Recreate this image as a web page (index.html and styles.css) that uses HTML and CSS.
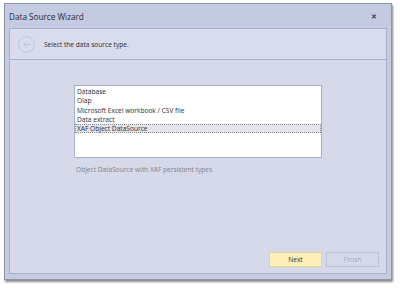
FILE: index.html
```html
<!DOCTYPE html>
<html>
<head>
<meta charset="utf-8">
<link rel="stylesheet" href="styles.css">
</head>
<body>
<div class="window">
  <div class="titlebar">
    <span class="title">Data Source Wizard</span>
    <span class="close">&#x2715;</span>
  </div>
  <div class="panel">
    <div class="header">
      <svg class="back" width="17" height="17" viewBox="0 0 17 17">
        <circle cx="8.5" cy="8.5" r="7.8" fill="none" stroke="#c0c5d8" stroke-width="1"/>
        <path d="M12 8.5H5.5M8.5 5.5L5.5 8.5L8.5 11.5" fill="none" stroke="#c0c5d8" stroke-width="1"/>
      </svg>
      <span class="htext">Select the data source type.</span>
    </div>
    <div class="content">
      <div class="list">
        <div class="item">Database</div>
        <div class="item">Olap</div>
        <div class="item">Microsoft Excel workbook / CSV file</div>
        <div class="item">Data extract</div>
        <div class="item selected">XAF Object DataSource</div>
      </div>
      <div class="desc">Object DataSource with XAF persistent types</div>
    </div>
    <div class="footer">
      <div class="btn next">Next</div>
      <div class="btn disabled">Finish</div>
    </div>
  </div>
</div>
</body>
</html>
```
FILE: styles.css
```css
html, body {
  margin: 0;
  padding: 0;
  background: #ffffff;
}
body {
  width: 400px;
  height: 288px;
  font-family: "Open Sans", "Noto Sans", sans-serif;
  padding-top: 3px;
  padding-left: 4px;
  box-sizing: border-box;
}
.window {
  width: 388px;
  height: 277px;
  box-sizing: border-box;
  border: 1px solid #8f95a3;
  background: #c4cadf;
  box-shadow: 1px 2px 2px rgba(60, 60, 60, 0.6);
  display: flex;
  flex-direction: column;
}
.titlebar {
  height: 24px;
  display: flex;
  align-items: center;
  justify-content: space-between;
  padding: 0 14px 0 4px;
}
.title {
  font-size: 8.2px;
  color: #2b2d33;
}
.close {
  font-size: 6.5px;
  font-weight: bold;
  color: #3a3d48;
}
.panel {
  flex: 1;
  margin: 0 4px 5px 4px;
  border: 1px solid #a9b0c9;
  background: #d6d9ea;
  display: flex;
  flex-direction: column;
}
.header {
  height: 30px;
  border-bottom: 1px solid #a9b0c9;
  background: #d9dcec;
  display: flex;
  align-items: center;
  padding-left: 8px;
}
.back {
  display: block;
}
.htext {
  font-size: 6.6px;
  color: #2b2d33;
  margin-left: 9px;
}
.content {
  flex: 1;
  padding: 25px 0 0 64px;
}
.list {
  width: 248px;
  height: 73px;
  box-sizing: border-box;
  border: 1px solid #a9b0c9;
  background: #ffffff;
  padding-top: 1px;
}
.item {
  height: 9.3px;
  line-height: 9.3px;
  font-size: 6.6px;
  color: #2b2d33;
  padding-left: 2px;
  box-sizing: border-box;
}
.item.selected {
  background: #e3e4ec;
  outline: 1px dotted #8a8a8a;
  outline-offset: -1px;
}
.desc {
  margin-top: 7px;
  margin-left: 2px;
  font-size: 6.6px;
  color: #80838e;
}
.footer {
  display: flex;
  justify-content: flex-end;
  gap: 4px;
  padding: 0 7px 6px 0;
}
.btn {
  width: 53px;
  height: 15px;
  box-sizing: border-box;
  display: flex;
  align-items: center;
  justify-content: center;
  font-size: 6.6px;
  border: 1px solid #bcc2d8;
  color: #2b2d33;
}
.btn.next {
  background: #fdefb9;
  border-color: #e8d396;
}
.btn.disabled {
  color: #a3a8bb;
  background: #d6d9ea;
}
```
